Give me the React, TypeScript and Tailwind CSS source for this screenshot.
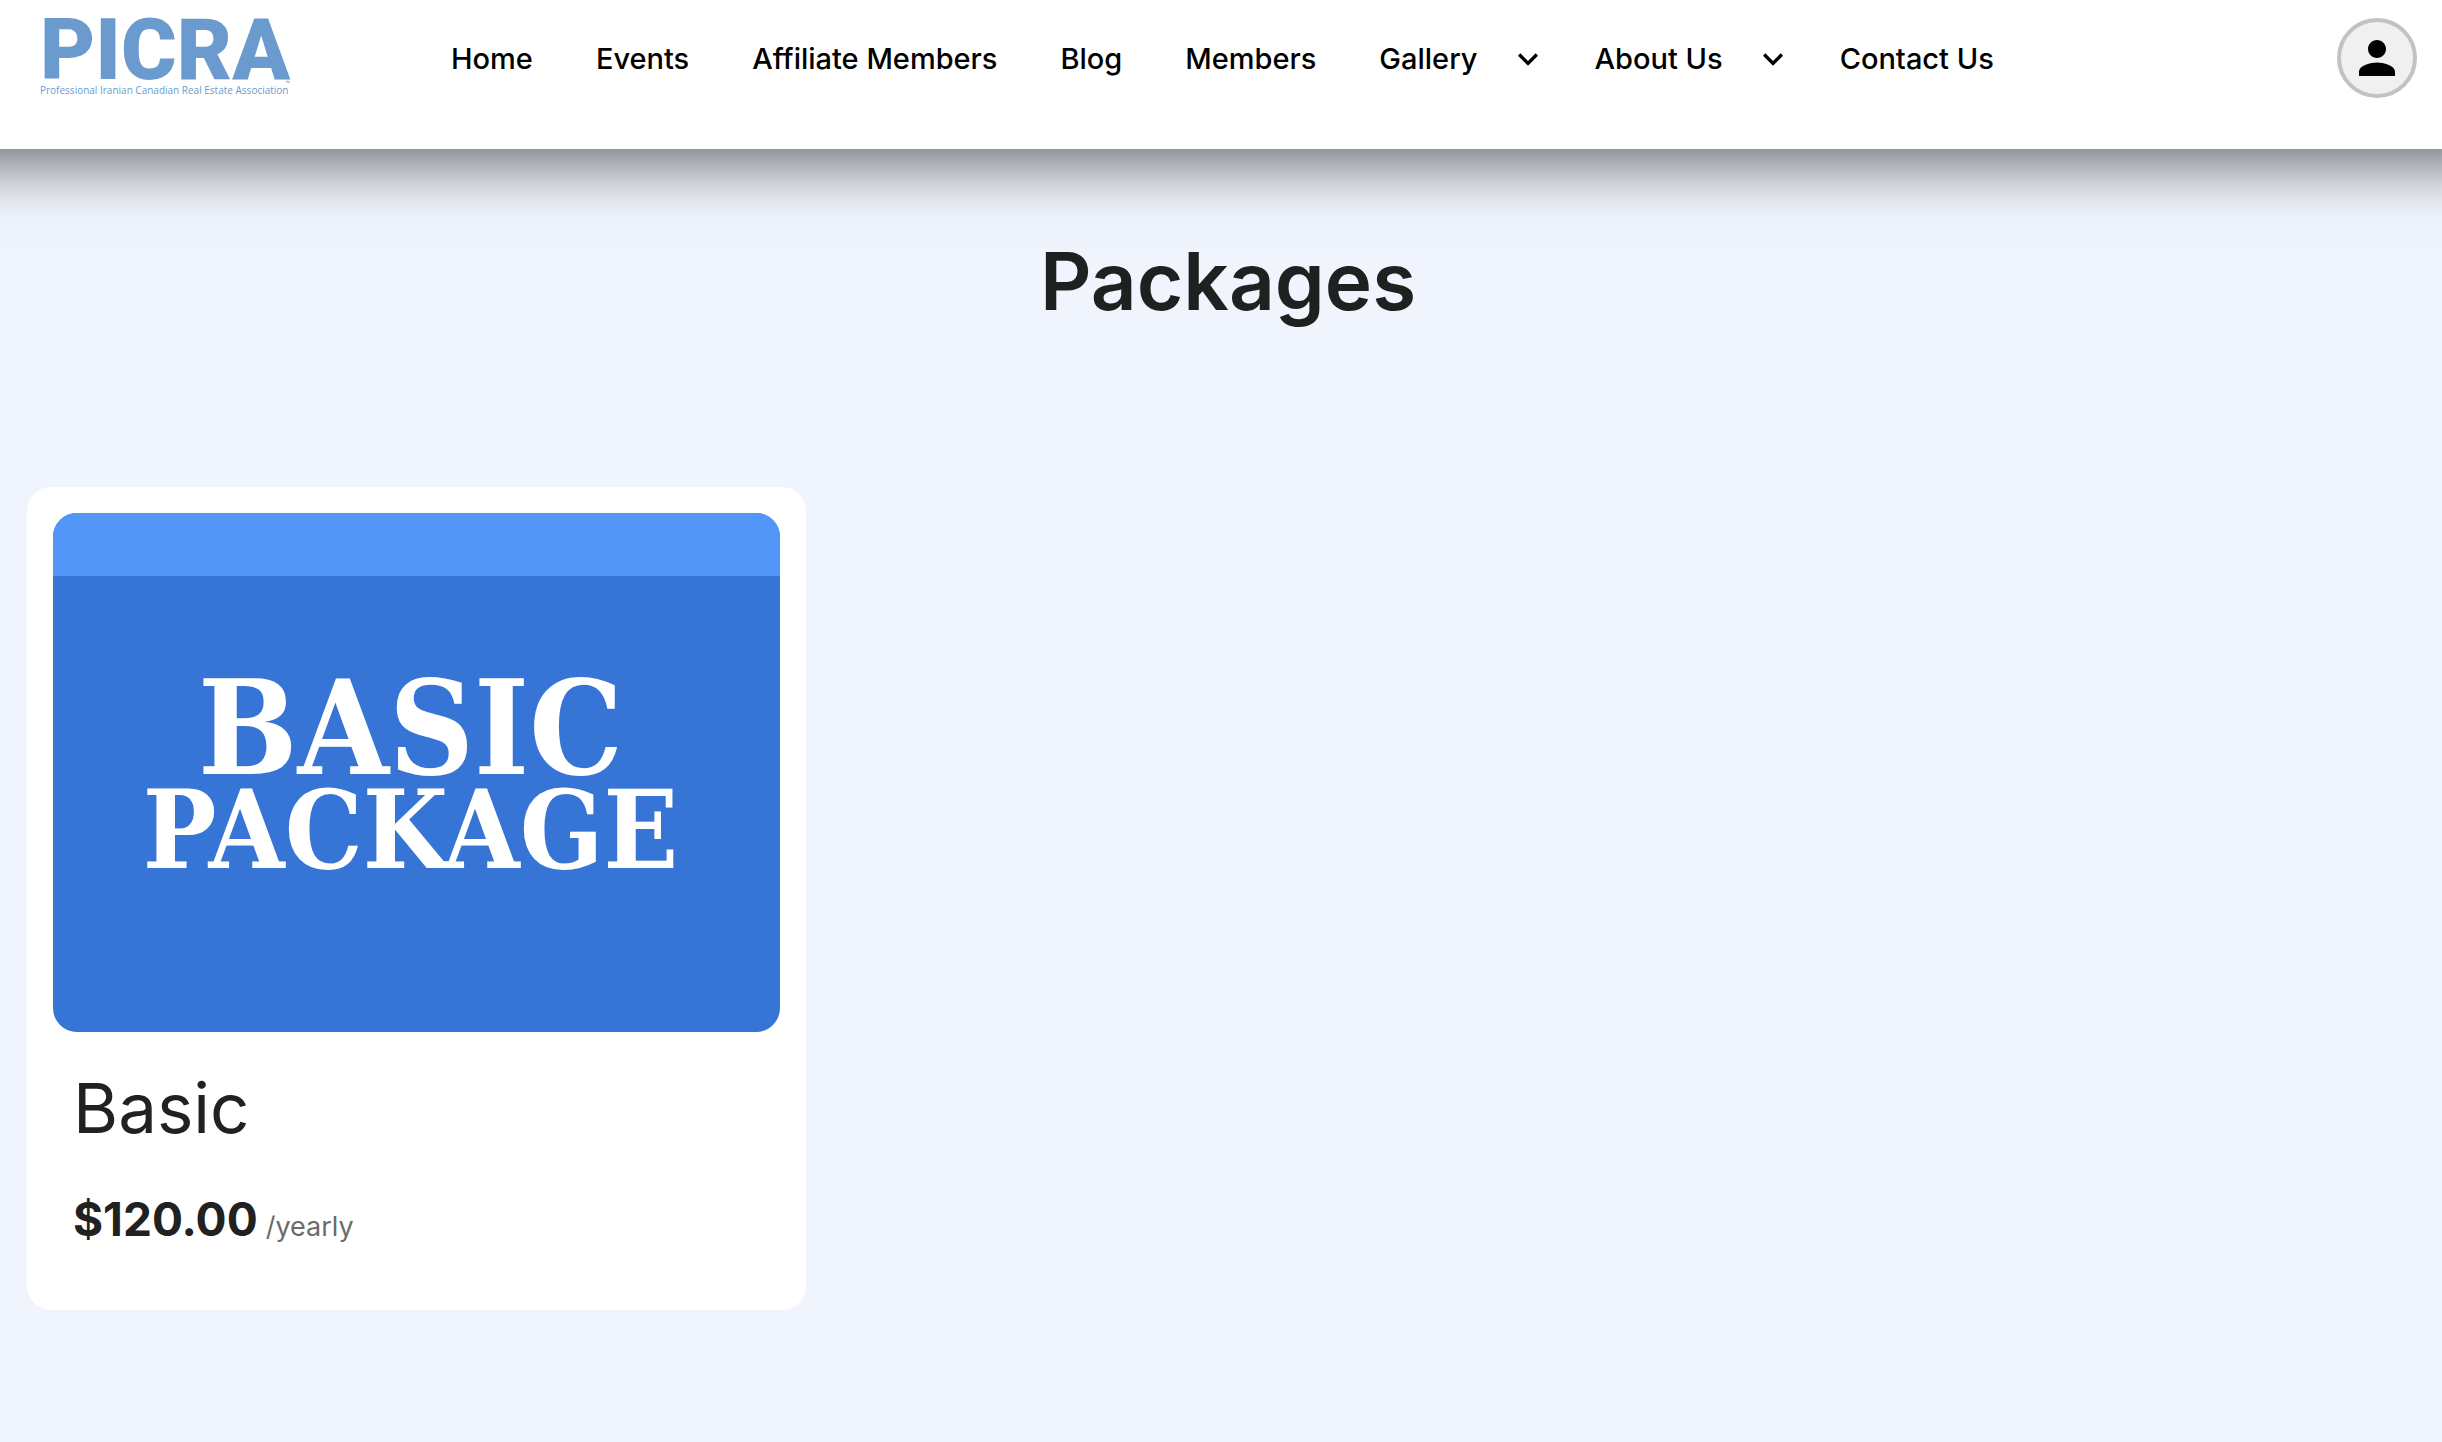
import React from "react";

const links = [
  { label: "Home" },
  { label: "Events" },
  { label: "Affiliate Members" },
  { label: "Blog" },
  { label: "Members" },
  { label: "Gallery", menu: true },
  { label: "About Us", menu: true },
  { label: "Contact Us" },
];

function Chevron() {
  return (
    <svg viewBox="0 0 24 24" className="size-10" fill="currentColor" aria-hidden="true">
      <path d="M7.41 8.59 12 13.17l4.59-4.58L18 10l-6 6-6-6 1.41-1.41z" />
    </svg>
  );
}

function Logo() {
  return (
    <a href="#" className="relative flex w-[250px] flex-col text-[#6b9bce]">
      <span className="font-['Roboto'] text-[85px] leading-[68px] font-black">PICRA</span>
      <span className="font-['Open_Sans'] text-[10px] leading-3 whitespace-nowrap">
        Professional Iranian Canadian Real Estate Association
      </span>
      <span className="absolute top-16 right-0 font-['Open_Sans'] text-[6px] leading-none">™</span>
    </a>
  );
}

export default function App() {
  return (
    <div className="min-h-screen overflow-x-hidden bg-[#f0f4fc] font-['Inter',sans-serif] text-[#212121]">
      <header className="relative flex h-[149px] items-start bg-white pt-4 pr-[25px] pl-10 shadow-[0_-44px_56px_60px_rgba(0,0,0,0.54)]">
        <Logo />
        <nav className="mt-[23px] ml-[161px] flex items-center gap-[63px] text-[29px] leading-10 font-medium whitespace-nowrap text-black">
          {links.map((l) => (
            <div key={l.label} className="flex items-center gap-[30px]">
              <a href="#">{l.label}</a>
              {l.menu && (
                <button type="button" aria-label={l.label + " menu"} className="-mr-4">
                  <Chevron />
                </button>
              )}
            </div>
          ))}
        </nav>
        <button
          type="button"
          aria-label="Account"
          className="mt-0.5 ml-auto flex size-20 items-center justify-center rounded-full border-4 border-[#c2c2c2] bg-[#f0f0f0] text-black"
        >
          <svg viewBox="0 0 24 24" className="size-[54px]" fill="currentColor" aria-hidden="true">
            <path d="M12 12c2.21 0 4-1.79 4-4s-1.790-4-4-4-4 1.790-4 4 1.790 4 4 4zm0 2c-2.670 0-8 1.340-8 4v2h16v-2c0-2.660-5.330-4-8-4z" />
          </svg>
        </button>
      </header>
      <main className="px-[27px] pb-28">
        <h1 className="pt-20 pl-3.5 text-center text-[80px] leading-[104px] font-semibold text-[#1f2120]">Packages</h1>
        <div className="mt-[154px] grid grid-cols-3">
          <article className="mr-[17px] rounded-3xl bg-white p-[26px]">
            <div className="flex aspect-[7/5] flex-col overflow-hidden rounded-3xl bg-[#3675d6] text-white">
              <div className="h-[63px] bg-[#5296f7]" />
              <div className="mt-[94px] flex flex-col items-center pr-3 font-['DejaVu_Serif_Condensed','DejaVu_Serif',serif] font-bold">
                <span className="text-[131px] leading-[116px]">BASIC</span>
                <span className="text-[109px] leading-[88px]">PACKAGE</span>
              </div>
            </div>
            <div className="px-5 pt-[34px] pb-[35px]">
              <h2 className="text-[69px] leading-[84px]">Basic</h2>
              <p className="mt-[39px] flex items-baseline gap-2">
                <span className="text-[46px] leading-[60px] font-bold">$120.00</span>
                <span className="text-[27px] text-[#6b6b6b]">/yearly</span>
              </p>
            </div>
          </article>
        </div>
      </main>
    </div>
  );
}
